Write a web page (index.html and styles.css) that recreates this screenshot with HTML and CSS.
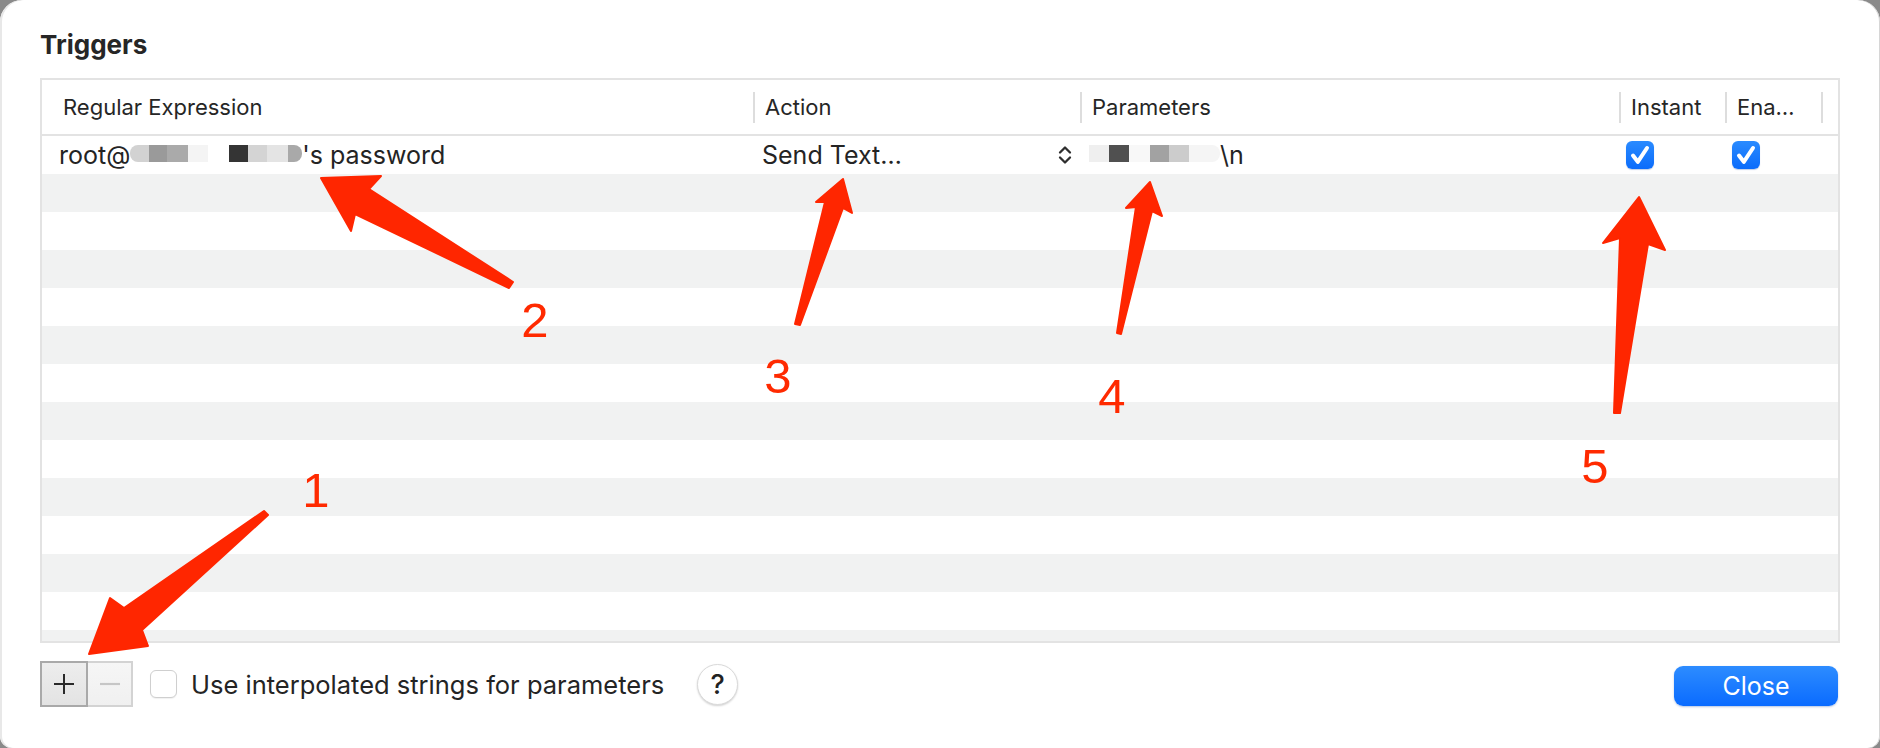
FILE: index.html
```html
<!DOCTYPE html>
<html>
<head>
<meta charset="utf-8">
<title>Triggers</title>
<link rel="stylesheet" href="styles.css">
</head>
<body>
<div class="window">
  <h1 class="title">Triggers</h1>
  <div class="table">
    <div class="thead">
      <div class="th first">Regular Expression</div>
      <div class="th">Action</div>
      <div class="th">Parameters</div>
      <div class="th">Instant</div>
      <div class="th">Ena…</div>
      <div class="th"></div>
    </div>
    <div class="tbody">
      <div class="row">
        <div class="td regex">root@<span class="rd rd-l" style="width:19px;background:#d2d2d2"></span><span class="rd" style="width:18px;background:#9a9a9a"></span><span class="rd" style="width:21px;background:#aaaaaa"></span><span class="rd" style="width:20px;background:#f4f4f4"></span><span class="rd" style="width:21px;background:#ffffff"></span><span class="rd" style="width:19px;background:#343434"></span><span class="rd" style="width:19px;background:#d4d4d4"></span><span class="rd" style="width:21px;background:#e4e4e4"></span><span class="rd rd-r" style="width:14px;background:#a9a9a9"></span>'s password</div>
        <div class="td action"><span>Send Text…</span>
          <svg class="chev" width="16" height="22" viewBox="0 0 16 22"><path d="M3 8.5 L8 3.5 L13 8.5 M3 13.5 L8 18.5 L13 13.5" fill="none" stroke="#2e2e2e" stroke-width="2.3" stroke-linecap="round" stroke-linejoin="round"/></svg>
        </div>
        <div class="td params"><span class="rd" style="width:20px;background:#efefef"></span><span class="rd" style="width:20px;background:#505050"></span><span class="rd" style="width:21px;background:#f8f8f8"></span><span class="rd" style="width:19px;background:#a2a2a2"></span><span class="rd" style="width:20px;background:#cccccc"></span><span class="rd rd-r" style="width:31px;background:#f5f5f5"></span>\n</div>
        <div class="td check"><span class="cb on"><svg width="28" height="28" viewBox="0 0 28 28"><path d="M7 14.5 L11.8 20.8 L21 7" fill="none" stroke="#fff" stroke-width="4" stroke-linecap="round" stroke-linejoin="round"/></svg></span></div>
        <div class="td check"><span class="cb on"><svg width="28" height="28" viewBox="0 0 28 28"><path d="M7 14.5 L11.8 20.8 L21 7" fill="none" stroke="#fff" stroke-width="4" stroke-linecap="round" stroke-linejoin="round"/></svg></span></div>
        <div class="td"></div>
      </div>
      <div class="row"></div><div class="row"></div><div class="row"></div><div class="row"></div>
      <div class="row"></div><div class="row"></div><div class="row"></div><div class="row"></div>
      <div class="row"></div><div class="row"></div><div class="row"></div><div class="row"></div>
      <div class="row"></div>
    </div>
  </div>
  <div class="footer">
    <div class="seg">
      <button class="seg-btn plus"><svg width="22" height="22" viewBox="0 0 22 22"><path d="M11 1 V21 M1 11 H21" stroke="#2a2a2a" stroke-width="2"/></svg></button>
      <button class="seg-btn minus"><svg width="22" height="22" viewBox="0 0 22 22"><path d="M1 11 H21" stroke="#c6c6c6" stroke-width="2.2"/></svg></button>
    </div>
    <label class="opt"><span class="cb off"></span><span class="opt-text">Use interpolated strings for parameters</span></label>
    <button class="help">?</button>
    <button class="close">Close</button>
  </div>
  <svg class="annot" width="1880" height="748" viewBox="0 0 1880 748">
    <g fill="#ff2600" stroke="#ff2600" stroke-width="2" stroke-linejoin="round">
      <polygon points="89,654 148,646 142,630 268,515 264,511 124,608 110,598"/>
      <polygon points="321,178 381,176 369,189 513,282 509,288 355,214 351,231"/>
      <polygon points="843,179 852,213 843,208 800,325 795,324 825,202 816,202"/>
      <polygon points="1150,182 1162,216 1152,211 1121,334 1117,333 1136,207 1126,208"/>
      <polygon points="1639,197 1665,250 1648,244 1620,413 1614,413 1620,238 1603,243"/>
    </g>
    <g class="nums" fill="#ff2a00" text-anchor="middle">
      <text x="316" y="507">1</text>
      <text x="535" y="337">2</text>
      <text x="778" y="393">3</text>
      <text x="1112" y="413">4</text>
      <text x="1595" y="483">5</text>
    </g>
  </svg>
</div>
</body>
</html>
```

FILE: styles.css
```css
* { box-sizing: border-box; }
html, body { margin: 0; padding: 0; }
body {
  width: 1880px;
  height: 748px;
  overflow: hidden;
  background: #8a8a8a;
  font-family: Inter, "Liberation Sans", Arial, sans-serif;
  color: #242424;
}
.window {
  position: relative;
  width: 1880px;
  height: 748px;
  background: #fff;
  border-radius: 22px 22px 12px 12px;
  padding: 29px 40px 0 40px;
  display: flex;
  flex-direction: column;
  box-shadow: inset 2px 0 0 #e8e8e8, inset -1px 0 0 #d6d6d6;
}
.title {
  margin: 0;
  font-size: 26px;
  line-height: 32px;
  height: 32px;
  font-weight: 700;
  color: #262626;
}
.table {
  margin-top: 17px;
  height: 565px;
  border: 2px solid #e3e3e3;
  display: flex;
  flex-direction: column;
  overflow: hidden;
  flex: none;
}
.thead, .row {
  display: grid;
  grid-template-columns: 711px 327px 539px 106px 96px 1fr;
}
.thead {
  height: 56px;
  border-bottom: 2px solid #e3e3e3;
  flex: none;
}
.th {
  display: flex;
  align-items: center;
  gap: 10px;
  font-size: 22px;
  color: #262626;
  white-space: nowrap;
}
.th::before {
  content: "";
  width: 2px;
  height: 31px;
  background: #dddddd;
  flex: none;
}
.th.first { padding-left: 21px; }
.th.first::before { display: none; }
.tbody { flex: 1; overflow: hidden; }
.row { height: 38px; }
.row:nth-child(even) { background: #f1f2f2; }
.td {
  font-size: 25px;
  line-height: 38px;
  white-space: nowrap;
  color: #242424;
}
.regex { padding-left: 17px; }
.rd {
  display: inline-block;
  height: 17px;
  vertical-align: 2px;
}
.rd-l { border-radius: 8px 0 0 8px; }
.rd-r { border-radius: 0 8px 8px 0; }
.action {
  display: flex;
  align-items: center;
  justify-content: space-between;
  padding: 0 7px 0 9px;
}
.chev { display: block; }
.params { padding-left: 9px; }
.check {
  display: flex;
  align-items: center;
  padding-left: 7px;
}
.cb {
  display: block;
  width: 28px;
  height: 28px;
  border-radius: 6px;
  flex: none;
}
.cb svg { display: block; }
.cb.on {
  background: linear-gradient(#2a8bff, #0b6cfb);
  box-shadow: 0 1px 1px rgba(0, 60, 160, 0.25);
}
.cb.off {
  width: 27px;
  background: #fff;
  border: 1.5px solid #cfcfcf;
  box-shadow: 0 1px 1px rgba(0, 0, 0, 0.06);
}
.footer {
  display: flex;
  align-items: center;
  margin-top: 18px;
  height: 46px;
  flex: none;
}
.seg { display: flex; height: 46px; }
.seg-btn {
  margin: 0;
  padding: 0;
  height: 46px;
  display: flex;
  align-items: center;
  justify-content: center;
}
.seg-btn svg { display: block; }
.plus {
  width: 48px;
  border: 2px solid #a9a9a9;
  background: linear-gradient(#ededed, #e3e3e3);
}
.minus {
  width: 45px;
  border: 2px solid #d3d3d3;
  border-left: none;
  background: linear-gradient(#f6f6f6, #f0f0f0);
}
.opt {
  display: flex;
  align-items: center;
  margin-left: 17px;
}
.opt-text {
  margin-left: 14px;
  font-size: 25.5px;
  color: #242424;
}
.help {
  margin: 0 0 0 33px;
  padding: 0;
  width: 41px;
  height: 41px;
  border-radius: 50%;
  border: 1px solid #dadada;
  background: #fff;
  box-shadow: 0 1px 2px rgba(0, 0, 0, 0.18);
  font-family: Inter, "Liberation Sans", Arial, sans-serif;
  font-size: 27px;
  font-weight: 500;
  color: #222;
  display: flex;
  align-items: center;
  justify-content: center;
}
.close {
  margin: 4px 2px 0 auto;
  padding: 0;
  width: 164px;
  height: 40px;
  border: none;
  border-radius: 9px;
  background: linear-gradient(#2d8cff, #0a6bff);
  box-shadow: 0 1px 2px rgba(0, 60, 160, 0.3);
  font-family: Inter, "Liberation Sans", Arial, sans-serif;
  font-size: 25px;
  color: #fff;
}
.annot {
  position: absolute;
  left: 0;
  top: 0;
  pointer-events: none;
}
.nums text {
  font-family: "Liberation Sans", Arial, sans-serif;
  font-size: 49px;
}
```
